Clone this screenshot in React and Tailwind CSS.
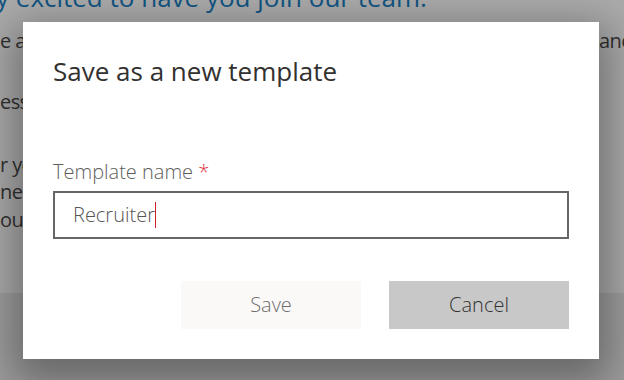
export default function App() {
  return (
    <div className="relative w-[624px] h-[380px] overflow-hidden bg-[#ececec] font-['Open_Sans',sans-serif]">
      <div className="h-[293px] bg-white overflow-hidden">
        <h1 className="-mt-[20px] -ml-[4px] whitespace-nowrap text-[26px] leading-[34px] text-[#1a7fc4]">
          y excited to have you join our team.
        </h1>
        <div className="mt-[14px] text-[20px] leading-[26px] text-[#4a4a4a] whitespace-nowrap tracking-[-0.6px]">
          <div className="flex">
            <div className="w-[599px] shrink-0 overflow-hidden">e are happy to welcome you to the company and</div>
            <div>ance</div>
          </div>
          <div className="mt-[35px]">essentially everything you need to get started.</div>
          <div className="mt-[37px]">r your first week, we have prepared a plan.</div>
          <div className="mt-[1px]">need anything, just let us know.</div>
          <div className="mt-[2px]">ou will meet the team soon.</div>
        </div>
      </div>
      <div className="absolute inset-0 bg-black/[0.33] flex items-center justify-center">
        <div className="-ml-[2px] w-[576px] h-[337px] bg-white shadow-[0_14px_40px_10px_rgba(0,0,0,0.35)] px-[30px] pt-[33px] pb-[30px] flex flex-col">
          <h2 className="text-[26px] leading-[32px] text-[#323130]">Save as a new template</h2>
          <div className="mt-[73px] text-[20px] leading-[24px] text-[#605e5c] font-light">
            Template name <span className="text-[#e0343f]">*</span>
          </div>
          <div className="mt-[7px] h-[48px] border-2 border-[#666666] flex items-center pl-[18px] text-[20px] text-[#555555] font-light">
            <span>Recruiter</span>
            <span className="w-px h-[26px] bg-[#d0202c]"></span>
          </div>
          <div className="mt-[42px] flex justify-end gap-[28px]">
            <button className="w-[180px] h-[48px] bg-[#faf9f8] text-[20px] text-[#6e6e6e] font-light">Save</button>
            <button className="w-[180px] h-[48px] bg-[#c8c8c8] text-[20px] text-[#333333] font-light">Cancel</button>
          </div>
        </div>
      </div>
    </div>
  );
}
